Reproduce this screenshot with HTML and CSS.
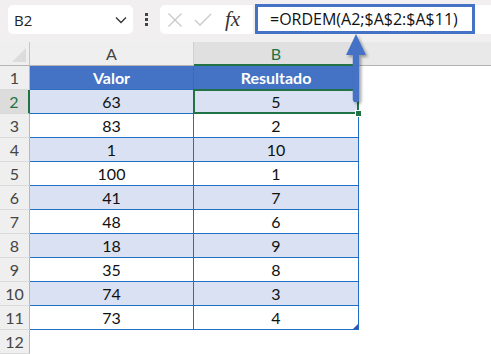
FILE: index.html
```html
<!DOCTYPE html>
<html lang="pt">
<head>
    <meta charset="UTF-8">
    <title>ORDEM</title>
    <link rel="stylesheet" href="styles.css">
</head>
<body>
    <div id="barra">
        <div class="caixa-nome">
            <span>B2</span>
            <svg class="chevron" width="12" height="8" viewBox="0 0 12 8"><path d="M1 1.5 L6 6.5 L11 1.5" fill="none" stroke="#333" stroke-width="1.3"/></svg>
        </div>
        <div class="pontos"><i></i><i></i><i></i></div>
        <div class="caixa-fx">
            <svg width="16" height="16" viewBox="0 0 16 16"><path d="M1.5 1.5 L14.5 14.5 M14.5 1.5 L1.5 14.5" stroke="#c8c8c8" stroke-width="1.3"/></svg>
            <svg width="18" height="16" viewBox="0 0 18 16"><path d="M1 8 L6 13 L17 2" fill="none" stroke="#c8c8c8" stroke-width="1.3"/></svg>
            <span class="fx">fx</span>
        </div>
        <div class="formula">
            <div class="destaque">=ORDEM(A2;$A$2:$A$11)</div>
        </div>
    </div>

    <div id="planilha">
        <div class="canto"></div>
        <div class="col">A</div>
        <div class="col ativa">B</div>
        <div class="col resto"></div>

        <div class="lin">1</div>
        <div class="cab">Valor</div>
        <div class="cab">Resultado</div>
        <div class="vazio"></div>

        <div class="lin ativa">2</div>
        <div class="cel par">63</div>
        <div class="cel par sel">5</div>
        <div class="vazio"></div>

        <div class="lin">3</div>
        <div class="cel">83</div>
        <div class="cel">2</div>
        <div class="vazio"></div>

        <div class="lin">4</div>
        <div class="cel par">1</div>
        <div class="cel par">10</div>
        <div class="vazio"></div>

        <div class="lin">5</div>
        <div class="cel">100</div>
        <div class="cel">1</div>
        <div class="vazio"></div>

        <div class="lin">6</div>
        <div class="cel par">41</div>
        <div class="cel par">7</div>
        <div class="vazio"></div>

        <div class="lin">7</div>
        <div class="cel">48</div>
        <div class="cel">6</div>
        <div class="vazio"></div>

        <div class="lin">8</div>
        <div class="cel par">18</div>
        <div class="cel par">9</div>
        <div class="vazio"></div>

        <div class="lin">9</div>
        <div class="cel">35</div>
        <div class="cel">8</div>
        <div class="vazio"></div>

        <div class="lin">10</div>
        <div class="cel par">74</div>
        <div class="cel par">3</div>
        <div class="vazio"></div>

        <div class="lin">11</div>
        <div class="cel">73</div>
        <div class="cel fim">4</div>
        <div class="vazio"></div>

        <div class="lin">12</div>
        <div class="vazio"></div>
        <div class="vazio"></div>
        <div class="vazio"></div>
    </div>

    <!-- seta apontando para a fórmula -->
    <svg id="seta" width="40" height="80" viewBox="0 0 40 80">
        <defs>
            <filter id="sombra" x="-50%" y="-20%" width="200%" height="150%">
                <feDropShadow dx="2" dy="2" stdDeviation="1.5" flood-color="#000" flood-opacity="0.35"/>
            </filter>
        </defs>
        <g filter="url(#sombra)">
            <line x1="16" y1="20" x2="16" y2="69" stroke="#4472c4" stroke-width="6.5" stroke-linecap="round"/>
            <path d="M16 4 L26 25 L6 25 Z" fill="#4472c4"/>
        </g>
    </svg>
</body>
</html>
```

FILE: styles.css
```css
body {
    margin: 0;
    width: 491px;
    height: 354px;
    overflow: hidden;
    position: relative;
    background: #fff;
    font-family: Lato, "Liberation Sans", sans-serif;
}

#barra {
    height: 42px;
    background: #f1efef;
    display: flex;
    align-items: flex-start;
    padding: 5px 0 0 8px;
    box-sizing: border-box;
}

.caixa-nome {
    width: 125px;
    height: 29px;
    background: #fff;
    border-radius: 5px;
    box-sizing: border-box;
    display: flex;
    align-items: center;
    justify-content: space-between;
    padding: 0 6px 0 6px;
    font-family: "Open Sans", sans-serif;
    font-size: 15px;
    color: #222;
}

.pontos {
    width: 27px;
    height: 29px;
    display: flex;
    flex-direction: column;
    align-items: center;
    justify-content: center;
    gap: 2px;
}

.pontos i {
    width: 3px;
    height: 3px;
    background: #444;
}

.caixa-fx {
    width: 93px;
    height: 29px;
    background: #fff;
    border-radius: 5px 0 0 5px;
    display: flex;
    align-items: center;
    gap: 11px;
    padding-left: 7px;
    box-sizing: border-box;
}

.fx {
    font-family: "Liberation Serif", serif;
    font-style: italic;
    font-size: 21px;
    color: #333;
    margin-left: 2px;
}

.formula {
    flex: 1;
    height: 29px;
    background: #fff;
    margin-left: 2px;
    position: relative;
}

.destaque {
    position: absolute;
    left: 0;
    top: -1px;
    width: 220px;
    height: 30px;
    border: 3px solid #4472c4;
    box-sizing: border-box;
    font-family: "Open Sans", sans-serif;
    font-size: 16px;
    line-height: 24px;
    padding-left: 12px;
    color: #111;
}

#planilha {
    display: grid;
    grid-template-columns: 30px 164px 165px 1fr;
    grid-auto-rows: 24px;
    font-size: 16px;
}

.canto {
    background: #efefef;
    border-right: 1px solid #c6c6c6;
    border-bottom: 1px solid #b4b4b4;
    position: relative;
}

.canto::after {
    content: "";
    position: absolute;
    right: 3px;
    bottom: 3px;
    border-left: 14px solid transparent;
    border-bottom: 14px solid #dcdcdc;
}

.col {
    background: #efefef;
    border-bottom: 1px solid #b4b4b4;
    border-right: 1px solid #d0d0d0;
    display: flex;
    align-items: center;
    justify-content: center;
    color: #444;
    box-sizing: border-box;
}

.col.ativa {
    background: #e0e0e0;
    color: #217346;
    border-bottom: 2px solid #217346;
}

.col.resto {
    background: #e9e9e9;
    border-right: none;
}

.lin {
    background: #efefef;
    border-right: 1px solid #b8b8b8;
    border-bottom: 1px solid #dadada;
    display: flex;
    align-items: center;
    justify-content: center;
    color: #444;
    box-sizing: border-box;
}

.lin.ativa {
    background: #dcdcdc;
    color: #217346;
    border-right: 2px solid #217346;
}

.cab {
    background: #4472c4;
    color: #fff;
    font-weight: bold;
    display: flex;
    align-items: center;
    justify-content: center;
    border-right: 1px solid #2f6fc0;
    border-bottom: 1px solid #2f6fc0;
    box-sizing: border-box;
}

.cel {
    display: flex;
    align-items: center;
    justify-content: center;
    color: #111;
    border-right: 1px solid #1f6fc6;
    border-bottom: 1px solid #1f6fc6;
    box-sizing: border-box;
}

.cel.par {
    background: #d9e1f2;
}

.sel {
    position: relative;
}

.sel::before {
    content: "";
    position: absolute;
    left: -1px;
    top: -1px;
    right: -1px;
    bottom: -1px;
    border: 2px solid #217346;
}

.sel::after {
    content: "";
    position: absolute;
    right: -4px;
    bottom: -4px;
    width: 5px;
    height: 5px;
    background: #217346;
    border: 1px solid #fff;
}

.fim {
    position: relative;
}

.fim::after {
    content: "";
    position: absolute;
    right: 0;
    bottom: 0;
    border-left: 5px solid transparent;
    border-bottom: 5px solid #3a50b8;
}

.vazio {
    background: #fff;
}

#seta {
    position: absolute;
    left: 340px;
    top: 30px;
}
```
